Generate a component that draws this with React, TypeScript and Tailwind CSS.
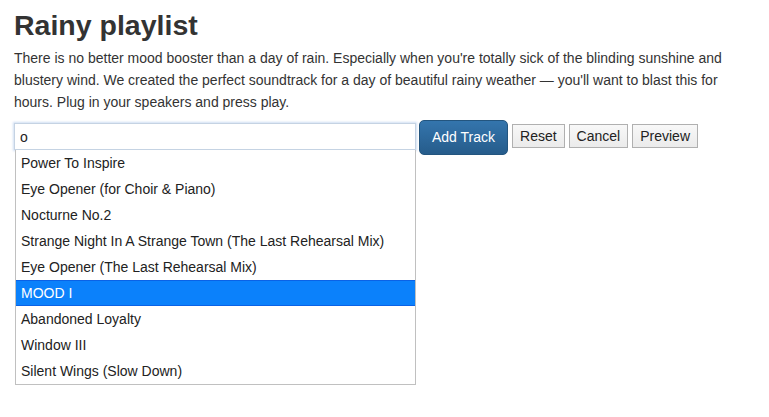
import { useState } from "react"

const tracks = [
  "Power To Inspire",
  "Eye Opener (for Choir & Piano)",
  "Nocturne No.2",
  "Strange Night In A Strange Town (The Last Rehearsal Mix)",
  "Eye Opener (The Last Rehearsal Mix)",
  "MOOD I",
  "Abandoned Loyalty",
  "Window III",
  "Silent Wings (Slow Down)",
]

export default function App() {
  const [query, setQuery] = useState("o")
  const [active, setActive] = useState(5)

  return (
    <div className="min-h-screen bg-white px-[14px] pt-[6px] text-[#333] font-['Helvetica_Neue','Liberation_Sans',Arial,sans-serif]">
      <h1 className="text-[28.5px] font-bold leading-[38px] text-[#333]">Rainy playlist</h1>
      <p className="mt-[3px] w-[745px] text-[14px] leading-[22px]">
        There is no better mood booster than a day of rain. Especially when you're totally sick of the blinding
        sunshine and blustery wind. We created the perfect soundtrack for a day of beautiful rainy weather — you'll
        want to blast this for hours. Plug in your speakers and press play.
      </p>

      <div className="mt-[10px] flex items-start gap-[3px]">
        <div className="flex w-[402px] flex-col">
          <input
            value={query}
            onChange={(e) => setQuery(e.target.value)}
            className="h-[27px] w-full border border-[#c5d3e3] px-[5px] text-[14px] text-[#222] shadow-[0_0_2px_1px_rgba(120,160,220,0.35)] outline-none"
          />
          <ul className="ml-px border-x border-b border-[#c0c0c0] bg-white">
            {tracks.map((t, i) => (
              <li
                key={t}
                onMouseEnter={() => setActive(i)}
                className={`flex h-[26px] items-center px-[5px] text-[14px] ${
                  i === active ? "border-y border-[#0a62e6] bg-[#0b81fb] text-white" : "text-[#222]"
                }`}
              >
                {t}
              </li>
            ))}
          </ul>
        </div>

        <div className="-mt-[3px] flex items-start gap-[4px]">
          <button className="h-[35px] rounded-[5px] border border-[#23557f] bg-gradient-to-b from-[#3475ad] to-[#265c8b] px-[12px] text-[14px] text-white">
            Add Track
          </button>
          <div className="mt-[4px] flex gap-[4px]">
            {["Reset", "Cancel", "Preview"].map((b) => (
              <button
                key={b}
                className="h-[24px] border border-[#b0b0b0] bg-gradient-to-b from-[#f8f8f8] to-[#ebebeb] px-[7px] text-[14px] text-[#222]"
              >
                {b}
              </button>
            ))}
          </div>
        </div>
      </div>
    </div>
  )
}
